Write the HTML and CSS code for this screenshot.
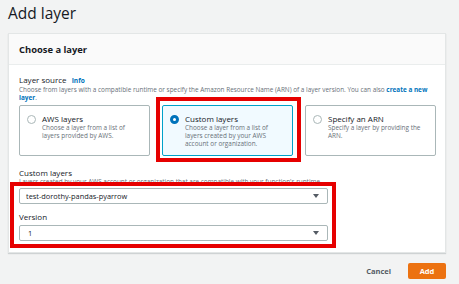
FILE: index.html
```html
<!DOCTYPE html>
<html lang="en">
<head>
<meta charset="utf-8">
<title>Add layer</title>
<link rel="stylesheet" href="styles.css">
</head>
<body>
<div class="page">
  <h1 class="title">Add layer</h1>
  <div class="card">
    <div class="card-header">Choose a layer</div>
    <div class="card-body">
      <div class="field">
        <div class="label">Layer source <a class="info">Info</a></div>
        <div class="desc">Choose from layers with a compatible runtime or specify the Amazon Resource Name (ARN) of a layer version. You can also <a class="link">create a new layer</a>.</div>
      </div>
      <div class="tiles">
        <div class="tile">
          <span class="radio"></span>
          <div class="tile-text">
            <div class="tile-title">AWS layers</div>
            <div class="tile-desc">Choose a layer from a list of layers provided by AWS.</div>
          </div>
        </div>
        <div class="tile tile-selected">
          <span class="radio radio-on"></span>
          <div class="tile-text">
            <div class="tile-title">Custom layers</div>
            <div class="tile-desc">Choose a layer from a list of layers created by your AWS account or organization.</div>
          </div>
        </div>
        <div class="tile">
          <span class="radio"></span>
          <div class="tile-text">
            <div class="tile-title">Specify an ARN</div>
            <div class="tile-desc">Specify a layer by providing the ARN.</div>
          </div>
        </div>
      </div>
      <div class="field field-custom">
        <div class="label">Custom layers</div>
        <div class="desc">Layers created by your AWS account or organization that are compatible with your function's runtime.</div>
        <div class="select"><span>test-dorothy-pandas-pyarrow</span><span class="arrow"></span></div>
      </div>
      <div class="field field-version">
        <div class="label">Version</div>
        <div class="select"><span class="one">1</span><span class="arrow"></span></div>
      </div>
    </div>
  </div>
  <div class="footer">
    <span class="cancel">Cancel</span>
    <span class="add">Add</span>
  </div>
  <div class="mark mark-tile"></div>
  <div class="mark mark-selects"></div>
</div>
</body>
</html>
```
FILE: styles.css
```css
html, body {
  margin: 0;
  padding: 0;
  background: #f2f3f3;
}
body {
  font-family: "Open Sans", "Noto Sans", sans-serif;
  color: #16191f;
  width: 459px;
  height: 284px;
  overflow: hidden;
}
.page {
  position: relative;
  padding: 0 13px 0 8px;
}
.title {
  margin: 0;
  height: 33px;
  font-size: 15.5px;
  line-height: 27px;
  font-weight: 400;
  color: #16191f;
}
.card {
  background: #fff;
  border: 1px solid #e3e6e6;
  box-shadow: 0 1px 1px rgba(0,28,36,0.15);
}
.card-header {
  height: 31px;
  box-sizing: border-box;
  background: #fafafa;
  border-bottom: 1px solid #eaeded;
  padding-left: 10px;
  font-size: 9.4px;
  font-weight: 700;
  line-height: 31px;
}
.card-body {
  padding: 10px 10px 11px 10px;
}
.label {
  font-size: 8px;
  line-height: 10px;
  color: #16191f;
}
.info {
  color: #0073bb;
  font-weight: 700;
  font-size: 6.6px;
  margin-left: 3px;
}
.desc {
  font-size: 6.4px;
  line-height: 8px;
  color: #687078;
}
.link {
  color: #0073bb;
  font-weight: 700;
}
.tiles {
  display: grid;
  grid-template-columns: 131px 131px 131px;
  column-gap: 12px;
  margin-top: 3px;
}
.tile {
  display: flex;
  gap: 6px;
  height: 51px;
  box-sizing: border-box;
  border: 1px solid #aab7b8;
  border-radius: 2px;
  padding: 8px 6px 0 7px;
  background: #fff;
}
.tile-selected {
  background: #f1faff;
  border-color: #00a1c9;
}
.radio {
  flex: none;
  width: 9px;
  height: 9px;
  box-sizing: border-box;
  border: 1px solid #aab7b8;
  border-radius: 50%;
  margin-top: 1px;
  background: #fff;
}
.radio-on {
  border: 3px solid #0073bb;
}
.tile-title {
  font-size: 8px;
  line-height: 10px;
}
.tile-desc {
  font-size: 6.4px;
  line-height: 8px;
  color: #687078;
}
.field-custom {
  margin-top: 12px;
}
.field-version {
  margin-top: 8px;
}
.select {
  display: flex;
  align-items: center;
  justify-content: space-between;
  width: 309px;
  height: 16px;
  box-sizing: border-box;
  border: 1px solid #aab7b8;
  border-radius: 2px;
  padding: 0 8px 0 6px;
  font-size: 7.4px;
  background: #fff;
  color: #16191f;
}
.field-custom .select {
  margin-top: 2px;
}
.field-version .select {
  margin-top: 3px;
}
.one {
  padding-left: 2px;
}
.arrow {
  width: 0;
  height: 0;
  border-left: 3px solid transparent;
  border-right: 3px solid transparent;
  border-top: 4px solid #545b64;
}
.footer {
  display: flex;
  justify-content: flex-end;
  align-items: center;
  gap: 17px;
  margin-top: 10px;
}
.cancel {
  font-size: 7.5px;
  font-weight: 700;
  color: #545b64;
}
.add {
  width: 38px;
  height: 16px;
  line-height: 16px;
  text-align: center;
  background: #ec7211;
  color: #fff;
  border-radius: 2px;
  font-size: 7.5px;
  font-weight: 700;
}
.mark {
  position: absolute;
  border: 4px solid #e60000;
  box-sizing: border-box;
}
.mark-tile {
  left: 156px;
  top: 97px;
  width: 145px;
  height: 65px;
}
.mark-selects {
  left: 10px;
  top: 182px;
  width: 326px;
  height: 66px;
}
```
